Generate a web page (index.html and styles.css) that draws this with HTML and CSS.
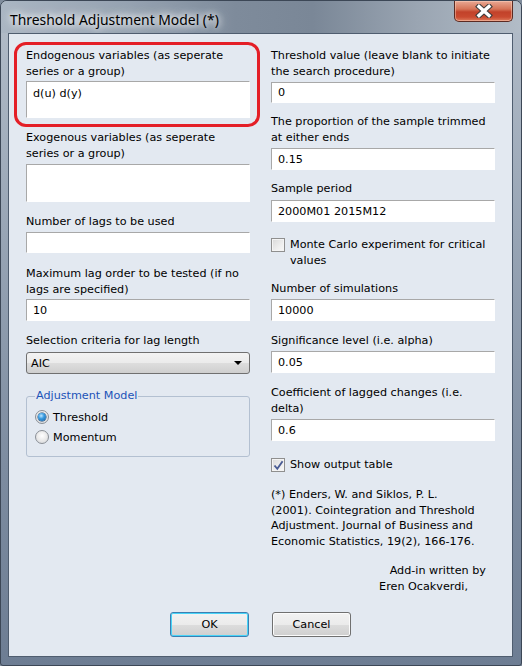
FILE: index.html
```html
<!DOCTYPE html>
<html lang="en">
<head>
    <meta charset="UTF-8">
    <title>Threshold Adjustment Model (*)</title>
    <link rel="stylesheet" href="styles.css">
</head>
<body>
    <div class="window">
        <!-- Title bar -->
        <div class="titlebar">
            <span class="title">Threshold Adjustment Model (*)</span>
            <button class="close" type="button" aria-label="Close">
                <svg width="20" height="14" viewBox="0 0 20 14">
                    <path d="M5 2.5 L15 11.5 M15 2.5 L5 11.5" stroke="#3b3b3b" stroke-width="5.5" stroke-linecap="square"/>
                    <path d="M5 2.5 L15 11.5 M15 2.5 L5 11.5" stroke="#ffffff" stroke-width="3.4" stroke-linecap="square"/>
                </svg>
            </button>
        </div>

        <div class="client">
            <div class="columns">
                <!-- Left column -->
                <div class="col">
                    <div class="field field-endo">
                        <label for="endo">Endogenous variables (as seperate<br>series or a group)</label>
                        <textarea id="endo" class="box tall" readonly>d(u) d(y)</textarea>
                        <span class="highlight"></span>
                    </div>

                    <div class="field field-exo">
                        <label for="exo">Exogenous variables (as seperate<br>series or a group)</label>
                        <textarea id="exo" class="box tall" readonly></textarea>
                    </div>

                    <div class="field field-lags">
                        <label for="lags">Number of lags to be used</label>
                        <input type="text" id="lags" class="box short" value="">
                    </div>

                    <div class="field field-maxlag">
                        <label for="maxlag">Maximum lag order to be tested (if no<br>lags are specified)</label>
                        <input type="text" id="maxlag" class="box" value="10">
                    </div>

                    <div class="field field-crit">
                        <label for="crit">Selection criteria for lag length</label>
                        <div class="combo" id="crit">
                            <span>AIC</span>
                            <span class="arrow"></span>
                        </div>
                    </div>

                    <fieldset class="group">
                        <legend>Adjustment Model</legend>
                        <label class="radio-row"><span class="radio checked"></span>Threshold</label>
                        <label class="radio-row"><span class="radio"></span>Momentum</label>
                    </fieldset>
                </div>

                <!-- Right column -->
                <div class="col">
                    <div class="field field-thr">
                        <label for="thr">Threshold value (leave blank to initiate<br>the search procedure)</label>
                        <input type="text" id="thr" class="box short" value="0">
                    </div>

                    <div class="field field-trim">
                        <label for="trim">The proportion of the sample trimmed<br>at either ends</label>
                        <input type="text" id="trim" class="box" value="0.15">
                    </div>

                    <div class="field field-smpl">
                        <label for="smpl">Sample period</label>
                        <input type="text" id="smpl" class="box" value="2000M01 2015M12">
                    </div>

                    <label class="check-row field-mc">
                        <span class="check"></span>
                        <span>Monte Carlo experiment for critical<br>values</span>
                    </label>

                    <div class="field field-sims">
                        <label for="sims">Number of simulations</label>
                        <input type="text" id="sims" class="box" value="10000">
                    </div>

                    <div class="field field-alpha">
                        <label for="alpha">Significance level (i.e. alpha)</label>
                        <input type="text" id="alpha" class="box" value="0.05">
                    </div>

                    <div class="field field-delta">
                        <label for="delta">Coefficient of lagged changes (i.e.<br>delta)</label>
                        <input type="text" id="delta" class="box" value="0.6">
                    </div>

                    <label class="check-row field-out">
                        <span class="check checked">
                            <svg width="11" height="11" viewBox="0 0 11 11">
                                <path d="M1.5 5.5 L4.3 8.8 L9.6 1.2" fill="none" stroke="#4a5c94" stroke-width="1.9"/>
                            </svg>
                        </span>
                        <span>Show output table</span>
                    </label>

                    <p class="cite">(*) Enders, W. and Siklos, P. L.<br>(2001). Cointegration and Threshold<br>Adjustment. Journal of Business and<br>Economic Statistics, 19(2), 166-176.</p>

                    <p class="credit">
                        <span class="credit-1">Add-in written by</span>
                        <span class="credit-2">Eren Ocakverdi,</span>
                    </p>
                </div>
            </div>

            <div class="actions">
                <button type="button" class="btn btn-default">OK</button>
                <button type="button" class="btn">Cancel</button>
            </div>
        </div>
    </div>
</body>
</html>
```

FILE: styles.css
```css
* {
    margin: 0;
    padding: 0;
    box-sizing: border-box;
}

body {
    font-family: 'DejaVu Sans', sans-serif;
    font-size: 11.2px;
    color: #000;
    background-color: #7f8c9c;
}

/* Window frame */
.window {
    width: 522px;
    height: 666px;
    display: flex;
    flex-direction: column;
    padding: 0 8px 8px 7px;
    border: 1px solid #3c4756;
    border-radius: 7px 7px 3px 3px;
    background: linear-gradient(180deg, #b3bdc9 0%, #98a5b5 35%, #7d8ca0 70%, #6d7d93 100%);
}

.titlebar {
    height: 32px;
    display: flex;
    align-items: flex-start;
    justify-content: space-between;
    margin: 0 -8px 0 -7px;
    padding: 0 8px 0 9px;
    border-radius: 6px 6px 0 0;
    background: linear-gradient(90deg, #aab6c3 0%, #95a2b1 25%, #7e8b9b 45%, #7a8797 60%, #9aa5b2 80%, #b2bcc7 100%);
}

.title {
    font-family: 'Noto Sans', sans-serif;
    font-size: 13.9px;
    line-height: 16px;
    margin-top: 11px;
    color: #000;
    text-shadow: 0 0 6px #fff, 0 0 10px #fff, 0 0 14px rgba(255, 255, 255, 0.8);
}

.close {
    width: 59px;
    height: 21px;
    border: 1px solid #5b2a22;
    border-top: none;
    border-radius: 0 0 5px 5px;
    background: linear-gradient(180deg, #e9a894 0%, #d67458 40%, #c2422a 55%, #c94a30 80%, #de7b5c 100%);
    box-shadow: inset 0 0 0 1px rgba(255, 220, 200, 0.45);
    display: flex;
    align-items: center;
    justify-content: center;
}

/* Client area */
.client {
    flex: 1;
    display: flex;
    flex-direction: column;
    padding: 14px 17px 0 17px;
    background-color: #e3e9f1;
    border: 1px solid #4f5d6f;
}

.columns {
    display: grid;
    grid-template-columns: 224px 224px;
    column-gap: 21px;
}

.col {
    display: flex;
    flex-direction: column;
}

.field {
    position: relative;
    margin-bottom: 12px;
}

.field label {
    display: block;
    line-height: 16px;
    margin-bottom: 2px;
}

.box {
    display: block;
    width: 100%;
    height: 22px;
    font-family: inherit;
    font-size: inherit;
    color: #000;
    padding: 0 6px;
    background: #fff;
    border: 1px solid;
    border-color: #a8a8a8 #ffffff #ffffff #a8a8a8;
    outline: none;
}

.box.short {
    height: 21px;
}

.box.tall {
    height: 37px;
    padding-top: 4px;
    resize: none;
    overflow: hidden;
    line-height: 16px;
}

/* red marker round the first field */
.highlight {
    position: absolute;
    top: -6px;
    left: -12px;
    right: -10px;
    bottom: -9px;
    border: 3px solid #e41f27;
    border-radius: 12px;
    pointer-events: none;
}

.field-endo label { margin-bottom: 1px; }
.field-exo .box.tall { height: 38px; }
.field-lags { margin-bottom: 13px; }
.field-maxlag label { margin-bottom: 1px; }
.field-crit { margin-bottom: 14px; }
.field-crit label { margin-bottom: 3px; }

/* Combo box */
.combo {
    height: 22px;
    display: flex;
    align-items: center;
    justify-content: space-between;
    padding: 0 7px 0 4px;
    border: 1px solid #707070;
    border-radius: 3px;
    background: linear-gradient(180deg, #f3f3f3 0%, #ebebeb 50%, #dddddd 51%, #cfcfcf 100%);
}

.arrow {
    width: 0;
    height: 0;
    border-left: 4px solid transparent;
    border-right: 4px solid transparent;
    border-top: 4px solid #000;
}

/* Group box */
.group {
    border: 1px solid #b3c0d1;
    border-radius: 3px;
    padding: 0 8px 9px 8px;
}

.group legend {
    color: #1c53b8;
    line-height: 16px;
    padding: 0 1px;
}

.radio-row {
    display: flex;
    align-items: center;
    height: 20px;
    gap: 4px;
}

.group legend + .radio-row {
    margin-top: 3px;
}

.radio {
    width: 14px;
    height: 14px;
    border-radius: 50%;
    border: 1px solid #8a8f96;
    background: radial-gradient(circle at 50% 40%, #ffffff 0%, #e8e8e8 55%, #cfd2d6 100%);
    position: relative;
}

.radio.checked::after {
    content: "";
    position: absolute;
    top: 2px;
    left: 2px;
    width: 8px;
    height: 8px;
    border-radius: 50%;
    background: radial-gradient(circle at 40% 35%, #bfe6ff 0%, #3a9ce0 40%, #145a9e 100%);
    box-shadow: 0 0 0 0.5px #0f3c6e;
}

/* Check boxes */
.check-row {
    display: flex;
    align-items: flex-start;
    gap: 5px;
    line-height: 16px;
}

.check {
    flex: none;
    width: 14px;
    height: 14px;
    margin-top: 1px;
    border: 1px solid #8f8f8f;
    background: linear-gradient(135deg, #d8d8d8 0%, #eeeeee 60%, #f8f8f8 100%);
    box-shadow: inset 0 0 0 1px #f4f4f4;
    display: flex;
    align-items: center;
    justify-content: center;
}

.field-mc {
    margin-top: 3px;
    margin-bottom: 12px;
}

.field-out {
    margin-top: 2px;
    margin-bottom: 14px;
}

.field-delta { margin-bottom: 14px; }
.field-smpl label { margin-bottom: 3px; }
.field-thr, .field-trim { margin-bottom: 11px; }

.cite {
    line-height: 15.5px;
    margin-bottom: 14px;
}

.credit {
    display: flex;
    flex-direction: column;
    align-items: flex-end;
    line-height: 16px;
}

.credit-1 { margin-right: 9px; }
.credit-2 { margin-right: 27px; }

/* Dialog buttons */
.actions {
    margin-top: auto;
    padding-bottom: 19px;
    display: flex;
    justify-content: center;
    gap: 23px;
}

.btn {
    width: 79px;
    height: 25px;
    font-family: inherit;
    font-size: inherit;
    color: #000;
    border: 1px solid #707070;
    border-radius: 3px;
    background: linear-gradient(180deg, #f2f2f2 0%, #ebebeb 50%, #dddddd 51%, #cfcfcf 100%);
    box-shadow: inset 0 0 0 1px #fbfbfb;
}

.btn-default {
    border-color: #3c7fb1;
    box-shadow: inset 0 0 0 1px #48d4f8;
}
```
